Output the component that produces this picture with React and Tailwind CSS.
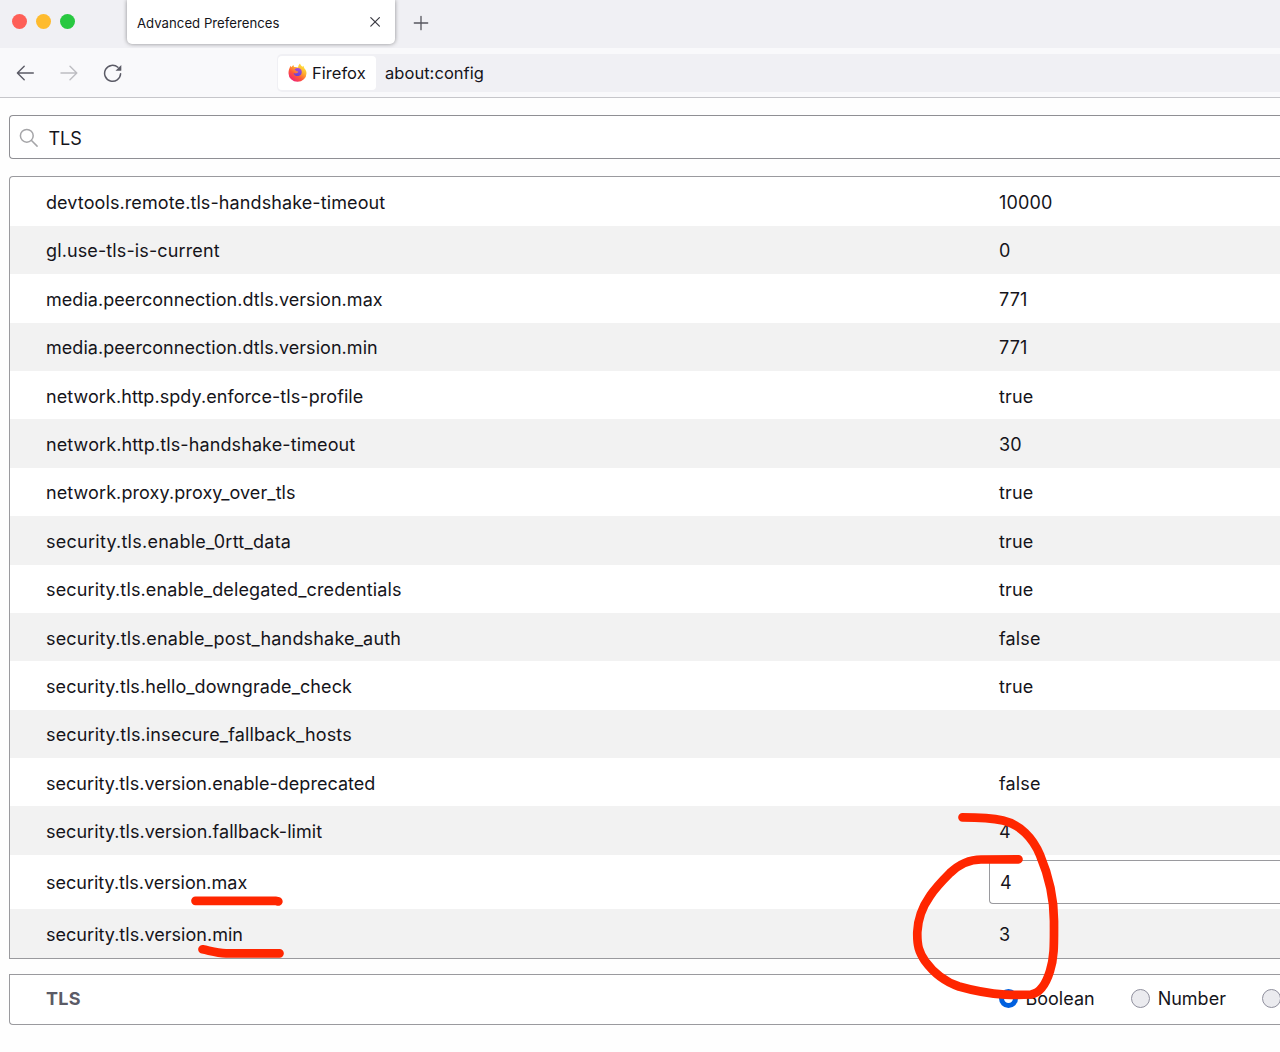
const prefs = [
  ["devtools.remote.tls-handshake-timeout", "10000", "tracking-[0.100px]"],
  ["gl.use-tls-is-current", "0", "tracking-[0.120px]"],
  ["media.peerconnection.dtls.version.max", "771", "tracking-[0.050px]"],
  ["media.peerconnection.dtls.version.min", "771", "tracking-[0.050px]"],
  ["network.http.spdy.enforce-tls-profile", "true", "tracking-[0.070px]"],
  ["network.http.tls-handshake-timeout", "30", "tracking-[0.110px]"],
  ["network.proxy.proxy_over_tls", "true", "tracking-[0.100px]"],
  ["security.tls.enable_0rtt_data", "true", "tracking-[0.260px]"],
  ["security.tls.enable_delegated_credentials", "true", "tracking-[0.140px]"],
  ["security.tls.enable_post_handshake_auth", "false", "tracking-[0.180px]"],
  ["security.tls.hello_downgrade_check", "true", "tracking-[0.090px]"],
  ["security.tls.insecure_fallback_hosts", "", "tracking-[0.140px]"],
  ["security.tls.version.enable-deprecated", "false", "tracking-[0.030px]"],
  ["security.tls.version.fallback-limit", "4", "tracking-[0.050px]"],
];

function FirefoxLogo() {
  return (
    <svg className="h-[19px] w-[19px] shrink-0" viewBox="0 0 19 19">
      <defs>
        <linearGradient id="flame" x1="0.85" y1="0.05" x2="0.2" y2="0.95">
          <stop offset="0" stopColor="#fff044" />
          <stop offset="0.35" stopColor="#ffb02e" />
          <stop offset="0.65" stopColor="#ff5a36" />
          <stop offset="1" stopColor="#f0207a" />
        </linearGradient>
        <linearGradient id="globe" x1="0.6" y1="0" x2="0.4" y2="1">
          <stop offset="0" stopColor="#a84bd8" />
          <stop offset="1" stopColor="#6542d8" />
        </linearGradient>
      </defs>
      <path
        d="M12 .4c.4 1.600 1.600 2.400 2.700 3.300l.6-.9c.5.8.8 1.600 1 2.500 1.300 1.300 2.200 3 2.200 4.900a9 8.600 0 0 1-18 0c0-2.600.8-5.400 2.200-7.500l.8 1.600C4 3.500 4.600 2.600 5.500 2c0 .9.300 1.500.7 2 1.400-.2 2.800 0 3.900.5C10.200 2.800 10.900 1.500 12 .4z"
        fill="url(#flame)"
      />
      <path
        d="M6.600 6.300c1.500-1.400 4-1.600 5.600-.5 1.700 1.200 2 3.500 1.100 5.200-1 1.800-3.200 2.500-5.100 1.900-1.500-.5-2.400-1.500-2.600-2.900 1.200.6 2.600.7 3.600 0 .5-.4 1-.6 1.200-1.200-.9-.3-1.900-.2-2.200-1-.7-.2-1.200-.6-1.600-1.500z"
        fill="url(#globe)"
      />
    </svg>
  );
}

function TabStrip() {
  return (
    <div className="flex h-12 bg-[#f0f0f4]">
      <div className="flex w-[127px] shrink-0 gap-[9.200px] pt-[14.300px] pl-[11.800px]">
        <span className="h-[15px] w-[15px] rounded-full bg-[#fe5f57]" />
        <span className="h-[15px] w-[15px] rounded-full bg-[#febb2e]" />
        <span className="h-[15px] w-[15px] rounded-full bg-[#28c840]" />
      </div>
      <div className="flex h-[43.500px] w-[268px] shrink-0 items-center justify-between rounded-b-[5px] bg-white pr-[14px] pl-[10px] pt-[2px] shadow-[0_0_4px_rgba(0,0,0,0.42)]">
        <span className="pt-[2px] text-[13.200px] tracking-[0.010px] text-[#15141a]">Advanced Preferences</span>
        <svg className="mb-px h-3 w-3" viewBox="0 0 12 12" fill="none" stroke="#3a3a42" strokeWidth="1.200" strokeLinecap="round">
          <path d="M1.800 1.600l8.600 8.600M10.400 1.600l-8.600 8.600" />
        </svg>
      </div>
      <svg className="mt-[14.500px] ml-[18px] h-4 w-4" viewBox="0 0 16 16" fill="none" stroke="#55555d" strokeWidth="1.300" strokeLinecap="round">
        <path d="M8 1.300v13.400M1.300 8h13.400" />
      </svg>
    </div>
  );
}

function Toolbar() {
  return (
    <div className="flex h-[50px] items-center border-b border-[#c6c6ca] bg-[#f9f9fb]">
      <div className="flex w-[277px] shrink-0 items-center gap-[24px] pt-px pl-[15px]">
        <svg className="h-5 w-5" viewBox="0 0 20 20" fill="none" stroke="#5b5b66" strokeWidth="1.400" strokeLinecap="round" strokeLinejoin="round">
          <path d="M18.300 10H2.500M9.200 3.200L2.400 10l6.800 6.800" />
        </svg>
        <svg className="h-5 w-5" viewBox="0 0 20 20" fill="none" stroke="#bdbdc2" strokeWidth="1.400" strokeLinecap="round" strokeLinejoin="round">
          <path d="M2 10h15.700M11 3.200l6.800 6.800-6.800 6.800" />
        </svg>
        <svg className="h-5 w-5" viewBox="0 0 20 20" fill="none" stroke="#5b5b66" strokeWidth="1.500" strokeLinecap="round">
          <path d="M17.600 10.800A8 8 0 1 1 14.900 4.300" />
          <path d="M18.300 2v5.200c0 .4-.3.600-.6.600h-5.200z" fill="#5b5b66" stroke="none" />
        </svg>
      </div>
      <div className="flex h-[38px] grow items-center rounded-l-[5px] bg-[#f0f0f4] pl-px text-[16.500px] text-[#15141a]">
        <div className="flex h-[34px] w-[98px] items-center gap-[5px] rounded-[4px] bg-white pl-[10px]">
          <FirefoxLogo />
          <span className="pt-[1.500px] tracking-[0.040px]">Firefox</span>
        </div>
        <span className="ml-[9px] pt-[1.500px] tracking-[0.040px]">about:config</span>
      </div>
    </div>
  );
}

function Radio({ label, checked }) {
  return (
    <label className="flex shrink-0 items-center gap-[7.500px]">
      {checked ? (
        <span className="h-[19px] w-[19px] rounded-full border-[5.500px] border-[#0060df] bg-white" />
      ) : (
        <span className="h-[19px] w-[19px] rounded-full border border-[#8f8f9d] bg-[#ebebef]" />
      )}
      {label && <span>{label}</span>}
    </label>
  );
}

function PrefRow({ name, children, className, tracking }) {
  return (
    <div className={"flex items-center pt-[2px] pl-9 " + className}>
      <span className={"w-[953px] shrink-0 " + tracking}>{name}</span>
      {children}
    </div>
  );
}

function Annotations() {
  return (
    <svg className="pointer-events-none absolute top-0 left-0 h-[1052px] w-[1280px]" viewBox="0 0 1280 1052" fill="none" stroke="#ff2600" strokeWidth="8.700" strokeLinecap="round" strokeLinejoin="round">
      <path d="M962.500 817.300C981 817.300 992 818 1003 820.500C1020 824.500 1033 838 1040 855C1048 874 1054 899 1054 921C1054 943 1054.500 957 1050 971C1046 984 1040 993 1031 994.500C1023 995 1012 995 1005 994.600C988 993.500 973 990.500 959 986.500C944 981.500 933 972 925 961C919 952 917 946 917.300 932C918 916 923 906 930 896C936 887 943 880 950 873C960 863.500 969 859.500 981 859.500L1018.500 859.300" />
      <path d="M195.500 900.800H276L278.300 901.500" />
      <path d="M202.500 949.300C211 951 217 953 226 953.300H279.500" />
    </svg>
  );
}

export default function App() {
  return (
    <div className="relative h-[1052px] w-[1280px] overflow-hidden bg-[#fefefe] font-['Inter',sans-serif] text-[18px] text-[#15141a]">
      <TabStrip />
      <Toolbar />
      <main className="pl-[9px]">
        <div className="mt-[17px] flex h-[44px] items-center gap-[9.500px] rounded-l-[4px] border border-r-0 border-[#8f8f94] bg-white pt-px pl-[9px]">
          <svg className="h-5 w-5" viewBox="0 0 20 20" fill="none" stroke="#a5a5a8" strokeWidth="1.500" strokeLinecap="round">
            <circle cx="7.800" cy="7.800" r="6.400" />
            <path d="M12.500 12.500l5.600 5.600" />
          </svg>
          <span className="pt-px">TLS</span>
        </div>
        <div className="mt-[17.400px] rounded-tl-[4px] border border-r-0 border-[#9a9a9e] bg-white">
          {prefs.map(([name, value, tracking], i) => (
            <PrefRow key={name} name={name} tracking={tracking} className={i % 2 ? "h-[48.400px] bg-[#f2f2f2]" : "h-[48.400px]"}>
              <span className="tracking-[0.150px]">{value}</span>
            </PrefRow>
          ))}
          <div className="flex h-[54px] items-center pl-9">
            <span className="w-[943px] shrink-0 pt-[2px]">security.tls.version.max</span>
            <div className="flex h-[44px] grow items-center rounded-l-[4px] border border-r-0 border-[#9a9a9e] bg-white pt-[2px] pl-[10px]">4</div>
          </div>
          <PrefRow name="security.tls.version.min" tracking="tracking-[0.030px]" className="h-[49px] bg-[#f2f2f2]">
            <span>3</span>
          </PrefRow>
        </div>
        <div className="mt-[15px] flex h-[51px] items-center rounded-bl-[4px] border border-r-0 border-[#9a9a9e] bg-white pb-[2px] pl-9">
          <span className="w-[953px] shrink-0 font-bold tracking-[0.300px] text-[#5b5b66]">TLS</span>
          <div className="flex gap-[36.500px]">
            <Radio label="Boolean" checked />
            <Radio label="Number" />
            <Radio />
          </div>
        </div>
      </main>
      <Annotations />
    </div>
  );
}
